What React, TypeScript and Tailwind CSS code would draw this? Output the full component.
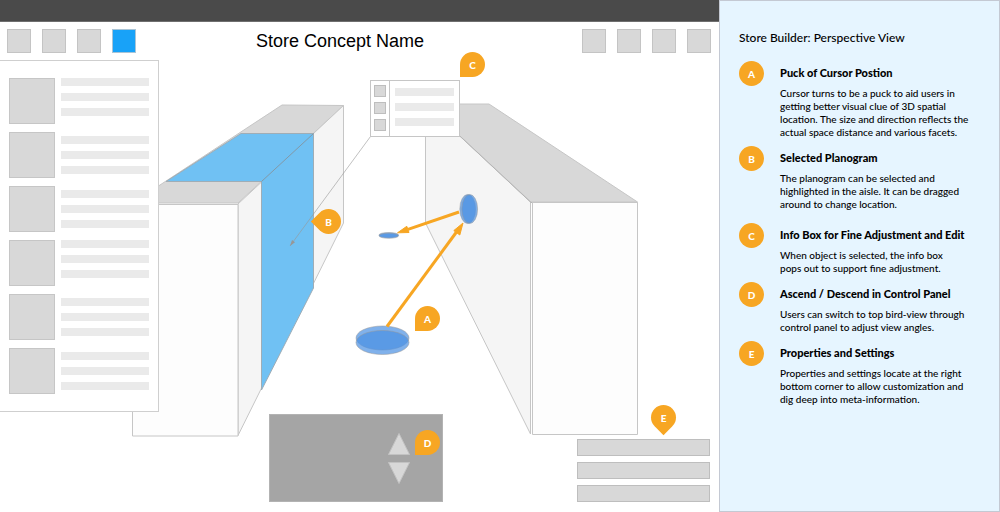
import React from "react";

type Note = { id: string; title: string; body: string[]; space: string };

const notes: Note[] = [
  {
    id: "A",
    title: "Puck of Cursor Postion",
    body: [
      "Cursor turns to be a puck to aid users in",
      "getting better visual clue of 3D spatial",
      "location. The size and direction reflects the",
      "actual space distance and various facets.",
    ],
    space: "",
  },
  {
    id: "B",
    title: "Selected Planogram",
    body: [
      "The planogram can be selected and",
      "highlighted in the aisle. It can be dragged",
      "around to change location.",
    ],
    space: "mt-[11px]",
  },
  {
    id: "C",
    title: "Info Box for Fine Adjustment and Edit",
    body: ["When object is selected, the info box", "pops out to support fine adjustment."],
    space: "mt-4",
  },
  {
    id: "D",
    title: "Ascend / Descend in Control Panel",
    body: ["Users can switch to top bird-view through", "control panel to adjust view angles."],
    space: "mt-[11px]",
  },
  {
    id: "E",
    title: "Properties and Settings",
    body: [
      "Properties and settings locate at the right",
      "bottom corner to allow customization and",
      "dig deep into meta-information.",
    ],
    space: "mt-[11px]",
  },
];

const products = ["items-start", "items-center", "items-center", "items-start", "items-center", "items-center"];

const pins = [
  { id: "A", place: "left-[415px] top-[306px]", turn: "" },
  { id: "B", place: "left-[316px] top-[209px]", turn: "rotate-45" },
  { id: "C", place: "left-[460px] top-[52px]", turn: "" },
  { id: "D", place: "left-[415px] top-[430px]", turn: "" },
  { id: "E", place: "left-[651px] top-[405px]", turn: "-rotate-45" },
];

function ToolButton({ label, active = false }: { label: string; active?: boolean }) {
  return (
    <button
      type="button"
      aria-label={label}
      className={
        active
          ? "size-6 border border-[#a9c4d6] bg-[#18a2f8]"
          : "size-6 border border-[#c4c4c4] bg-[#d8d8d8]"
      }
    />
  );
}

function Lines() {
  return (
    <div className="flex flex-1 flex-col gap-[7px]">
      <div className="h-2 bg-[#eaeaea]" />
      <div className="h-2 bg-[#eaeaea]" />
      <div className="h-2 bg-[#eaeaea]" />
    </div>
  );
}

function Scene() {
  return (
    <svg className="absolute inset-0 h-full w-full" aria-hidden="true">
      <g stroke="#c6c6c6" strokeWidth="1" strokeLinejoin="round">
        <polygon points="282,105 343.5,105.5 238,203 132.5,203" fill="#d8d8d8" />
        <polygon points="238,204 343.5,105.5 343.5,223 238,435.5" fill="#f5f5f5" />
        <rect x="132.5" y="204.5" width="105.5" height="231.5" fill="#fdfdfd" />
        <polygon points="425.5,104 489,104 637.5,202 531,202" fill="#d8d8d8" />
        <polygon points="425.5,104 530.5,202 530.5,434 425.5,223" fill="#f5f5f5" />
        <path d="M425.5 104L531 202.5H637.5" fill="none" stroke="#b5b5b5" />
        <rect x="532.5" y="202.5" width="105" height="232" fill="#fdfdfd" />
      </g>
      <g stroke="#9fadb6" strokeWidth="1" strokeLinejoin="round">
        <polygon points="241,133.5 313.5,133.5 313.5,288 261.5,390 261.5,181.5 166,181.5" fill="#70c1f3" />
        <line x1="313.5" y1="133.5" x2="261.5" y2="181.5" stroke="#8299a8" />
      </g>
      <line x1="370.5" y1="136.5" x2="290" y2="246" stroke="#979797" strokeOpacity="0.6" />
      <polygon points="290,246 292,240 295,242.2" fill="#979797" />
      <g fill="#4a90e2" fillOpacity="0.7" stroke="#979797" strokeOpacity="0.5">
        <ellipse cx="382.5" cy="338" rx="26.5" ry="12" />
        <ellipse cx="382.5" cy="342.5" rx="26.5" ry="12" />
        <ellipse cx="467.7" cy="209" rx="7.9" ry="14.5" />
        <ellipse cx="469.7" cy="209" rx="7.9" ry="14.5" />
        <ellipse cx="388.8" cy="235" rx="9.8" ry="2.5" />
        <ellipse cx="388.8" cy="235.8" rx="9.8" ry="2.5" />
      </g>
      <g stroke="#f7a623" fill="#f7a623">
        <line x1="387" y1="326.5" x2="456.5" y2="232" strokeWidth="3" />
        <polygon points="463,223 459.8,235 453.8,230.6" strokeWidth="1" />
        <line x1="459" y1="212" x2="408" y2="229.3" strokeWidth="3" />
        <polygon points="397.5,232.8 406.8,226.3 409,232.5" strokeWidth="1" />
      </g>
    </svg>
  );
}

export default function App() {
  return (
    <div className="flex min-h-screen bg-white font-['Lato',sans-serif] text-black">
      <main className="relative flex min-w-0 flex-1 flex-col">
        <Scene />
        <div className="h-[22px] border-b border-[#6f6f6f] bg-[#4a4a4a]" />
        <header className="relative flex h-[38px] items-center pr-2 pl-[7px]">
          <nav aria-label="Tools" className="flex gap-[11px]">
            <ToolButton label="Tool 1" />
            <ToolButton label="Tool 2" />
            <ToolButton label="Tool 3" />
            <ToolButton label="Tool 4" active />
          </nav>
          <h1 className="ml-[120px] font-['Liberation_Sans',sans-serif] text-lg leading-6">Store Concept Name</h1>
          <nav aria-label="View" className="ml-auto flex gap-[11px]">
            <ToolButton label="View 1" />
            <ToolButton label="View 2" />
            <ToolButton label="View 3" />
            <ToolButton label="View 4" />
          </nav>
        </header>

        <section
          aria-label="Products"
          className="relative flex w-[159px] flex-col gap-2 border border-l-0 border-[#cfcfcf] bg-white py-[17px] pr-[9px] pl-[9px]"
        >
          {products.map((align, i) => (
            <div key={i} className={`flex gap-[6px] ${align}`}>
              <div className="size-[46px] border border-[#c6c6c6] bg-[#d8d8d8]" />
              <Lines />
            </div>
          ))}
        </section>

        <div className="relative mt-auto flex items-end justify-between pr-[9px] pb-[10px] pl-[269px]">
          <div className="flex h-[88px] w-[174px] flex-col items-end justify-center gap-[7px] border border-[#b3b3b3] bg-[#a5a5a5] pr-8">
            <button type="button" aria-label="Ascend" className="block">
              <svg className="block h-[22px] w-[22px]" viewBox="0 0 22 22">
                <polygon points="11,0.5 21.5,21.5 0.5,21.5" fill="#d8d8d8" stroke="#c2c2c2" />
              </svg>
            </button>
            <button type="button" aria-label="Descend" className="block">
              <svg className="block h-[22px] w-[22px]" viewBox="0 0 22 22">
                <polygon points="0.5,0.5 21.5,0.5 11,21.5" fill="#d8d8d8" stroke="#c2c2c2" />
              </svg>
            </button>
          </div>
          <div className="flex w-[133px] flex-col gap-[6px]">
            <button type="button" aria-label="Property 1" className="h-[17px] border border-[#bebebe] bg-[#d8d8d8]" />
            <button type="button" aria-label="Property 2" className="h-[17px] border border-[#bebebe] bg-[#d8d8d8]" />
            <button type="button" aria-label="Property 3" className="h-[17px] border border-[#bebebe] bg-[#d8d8d8]" />
          </div>
        </div>

        <div className="absolute top-[80px] left-[370px] flex h-[57px] w-[90px] border border-[#c6c6c6] bg-white">
          <div className="flex w-[19px] flex-col items-center gap-[5px] border-r border-[#c6c6c6] pt-1">
            <div className="size-3 border border-[#bebebe] bg-[#d8d8d8]" />
            <div className="size-3 border border-[#bebebe] bg-[#d8d8d8]" />
            <div className="size-3 border border-[#bebebe] bg-[#d8d8d8]" />
          </div>
          <div className="flex flex-1 px-[5px] pt-[7px]">
            <Lines />
          </div>
        </div>

        {pins.map((pin) => (
          <div key={pin.id} className={`absolute grid size-[25px] place-items-center ${pin.place}`}>
            <span className={`absolute inset-0 rounded-full rounded-bl-none bg-[#f7a623] ${pin.turn}`} />
            <span className="relative text-[10px] leading-3 font-black text-white">{pin.id}</span>
          </div>
        ))}
      </main>

      <aside className="w-[281px] shrink-0 border border-[#c4c9d3] bg-[#e6f5ff] pt-[29px] pr-2 pb-6 pl-[19px]">
        <h2 className="text-[12px] leading-4 font-medium">Store Builder: Perspective View</h2>
        <ol className="mt-[19px]">
          {notes.map((note) => (
            <li key={note.id} className={`flex gap-4 ${note.space}`}>
              <span className="-mt-[4px] grid size-[25px] shrink-0 place-items-center rounded-full bg-[#f7a623] text-[10px] leading-3 font-black text-white">
                {note.id}
              </span>
              <div>
                <h3 className="text-[11px] leading-4 font-black">{note.title}</h3>
                <p className="mt-[6px] text-[10px] leading-[13px] font-medium whitespace-nowrap">
                  {note.body.map((line) => (
                    <span key={line} className="block">
                      {line}
                    </span>
                  ))}
                </p>
              </div>
            </li>
          ))}
        </ol>
      </aside>
    </div>
  );
}
